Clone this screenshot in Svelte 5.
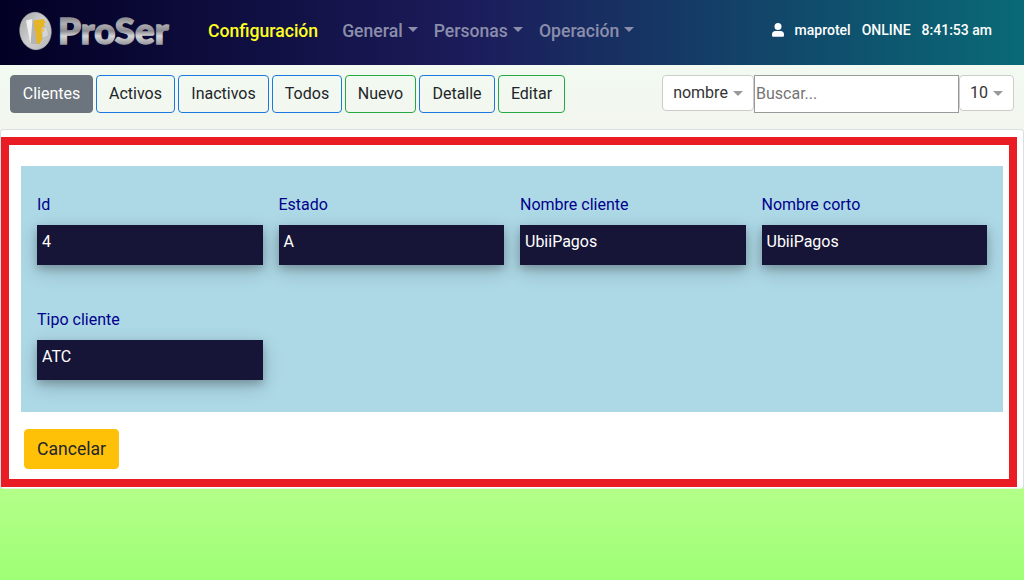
<script>
  const menu = ['General', 'Personas', 'Operación'];
  const actions = [
    { label: 'Clientes', kind: 'active', w: 83 },
    { label: 'Activos', kind: 'blue', w: 79 },
    { label: 'Inactivos', kind: 'blue', w: 91 },
    { label: 'Todos', kind: 'blue', w: 70 },
    { label: 'Nuevo', kind: 'green', w: 71 },
    { label: 'Detalle', kind: 'blue', w: 76 },
    { label: 'Editar', kind: 'green', w: 67 }
  ];
  const fields = [
    ['Id', '4'],
    ['Estado', 'A'],
    ['Nombre cliente', 'UbiiPagos'],
    ['Nombre corto', 'UbiiPagos'],
    ['Tipo cliente', 'ATC']
  ];
</script>

<div class="page">
  <header>
    <svg class="logo" width="156" height="46" viewBox="0 0 156 46" role="img" aria-label="ProSer">
      <defs>
        <linearGradient id="disc" x1="0" y1="0" x2="1" y2="1">
          <stop offset="0" stop-color="#a4a4a6" />
          <stop offset=".5" stop-color="#cfcfcf" />
          <stop offset="1" stop-color="#b5b5b5" />
        </linearGradient>
        <linearGradient id="metal" gradientUnits="userSpaceOnUse" x1="0" y1="9" x2="0" y2="37">
          <stop offset="0" stop-color="#85858b" />
          <stop offset=".25" stop-color="#b0b0b4" />
          <stop offset=".5" stop-color="#8b8b92" />
          <stop offset=".68" stop-color="#d6d6d9" />
          <stop offset="1" stop-color="#94949b" />
        </linearGradient>
      </defs>
      <ellipse cx="20.500" cy="23" rx="15.700" ry="18.700" transform="rotate(-6 20.500 23)" fill="url(#disc)" stroke="#bcbcbc" stroke-width=".6" />
      <path d="M11 12.500L17.500 11 22 36 15.500 36.500Z" fill="#f0f0f1" />
      <path d="M15.500 36.500L22 36 23.500 34 19 12 17.500 11Z" fill="#b4b4b6" />
      <path d="M18.500 12.500L29 11 29 13 31 13.500 29 16 30 18.500 26.500 20 27.500 31 24.500 36 22 36Z" fill="#e5b526" />
      <path d="M26.500 22L32 18.500 33.500 27.500 27.500 30.500Z" fill="#d4d4d5" stroke="#aaa" stroke-width=".4" />
      <path d="M26.500 22L29 20.500 29 23 27 25Z" fill="#edc23c" />
      <text x="43" y="35.500" class="wordmark" fill="url(#metal)" stroke="url(#metal)" textLength="110.500" lengthAdjust="spacingAndGlyphs">ProSer</text>
    </svg>
    <nav>
      <a class="current" href="#configuracion">Configuración</a>
      {#each menu as item}
        <a href="#{item}">{item}<i class="caret"></i></a>
      {/each}
    </nav>
    <div class="session">
      <svg width="12" height="14" viewBox="0 0 12 14" aria-hidden="true">
        <circle cx="6" cy="3.500" r="3.500" fill="#fff" />
        <path d="M3.600 8h4.800A3.600 3.600 0 0 1 12 11.600V12.600Q12 13.800 10.800 13.800H1.200Q0 13.800 0 12.600V11.600A3.600 3.600 0 0 1 3.600 8Z" fill="#fff" />
      </svg>
      <span>maprotel</span><span>ONLINE</span><span>8:41:53 am</span>
    </div>
  </header>

  <section class="toolbar">
    <div class="actions">
      {#each actions as a}
        <button class={a.kind} style="width: {a.w}px">{a.label}</button>
      {/each}
    </div>
    <div class="search">
      <button class="select by">nombre<i class="caret"></i></button>
      <input type="text" placeholder="Buscar..." />
      <button class="select count">10<i class="caret"></i></button>
    </div>
  </section>

  <main>
    <div class="frame">
      <div class="fields">
        {#each fields as [label, value]}
          <div class="field">
            <div class="label">{label}</div>
            <div class="value">{value}</div>
          </div>
        {/each}
      </div>
      <button class="cancel">Cancelar</button>
    </div>
  </main>
</div>

<style>
  :global(body) {
    margin: 0;
    overflow: hidden;
  }
  .page {
    height: 580px;
    display: flex;
    flex-direction: column;
    font: 16px/24px Roboto, sans-serif;
    color: #212529;
    background: linear-gradient(#f2faf1 65px, #f2f6ee 129px, #b3ff88 489px, #9eff75 580px);
  }
  .page * {
    box-sizing: border-box;
  }
  header {
    height: 65px;
    flex: none;
    display: flex;
    align-items: center;
    padding-bottom: 3px;
    background: linear-gradient(90deg, #020024 0%, #1c1c5b 46%, #096a76 100%);
  }
  .logo {
    margin-left: 15px;
    flex: none;
  }
  .wordmark {
    font: 900 36px Lato, sans-serif;
    stroke-width: 1.4px;
  }
  nav {
    display: flex;
    margin-left: 37px;
    gap: 16px;
    font-size: 17.6px;
    font-weight: 500;
  }
  nav a {
    color: #8b8eab;
    text-decoration: none;
    white-space: nowrap;
  }
  nav a.current {
    color: #ff2;
    margin-right: 8px;
  }
  .caret {
    display: inline-block;
    border: 5px solid transparent;
    border-top-color: currentColor;
    border-bottom: 0;
    margin-left: 5px;
    vertical-align: 5px;
  }
  nav .caret {
    margin-left: 5.100px;
    vertical-align: 5px;
  }
  .session {
    display: flex;
    align-items: center;
    gap: 11px;
    margin-left: auto;
    margin-right: 32px;
    font-size: 14px;
    font-weight: 500;
    color: #fff;
    position: relative;
    top: -1px;
  }
  .toolbar {
    height: 64px;
    flex: none;
    display: flex;
    justify-content: space-between;
    padding: 10px 10px 0;
  }
  .actions {
    display: flex;
    gap: 3px;
  }
  button {
    font: inherit;
    color: inherit;
    padding: 0;
    border-radius: 4px;
    white-space: nowrap;
  }
  .actions button {
    height: 38px;
    background: transparent;
    border: 1px solid #1a78df;
  }
  .actions .active {
    background: #6c757d;
    border-color: #6c757d;
    color: #fff;
  }
  .actions .green {
    border-color: #28a745;
  }
  .search {
    display: flex;
    align-items: flex-start;
  }
  .select {
    height: 36px;
    background: #fff;
    border: 1px solid #ccc;
    color: #333;
  }
  .select .caret {
    color: #999;
    margin-left: 5px;
    vertical-align: 2px;
  }
  .by {
    width: 92px;
  }
  .count {
    width: 55px;
  }
  input {
    width: 205px;
    height: 38px;
    font: inherit;
    padding: 0 1px 2px;
    border: 1px solid #999;
    border-radius: 0;
    background: #fff;
  }
  input::placeholder {
    color: #757575;
  }
  main {
    height: 360px;
    flex: none;
    padding: 7px 6px 0 0;
    background: #fff;
    border: 1px solid #dcdfe0;
    border-bottom-color: #e9f5e5;
    border-radius: 4px;
  }
  .frame {
    height: 350px;
    border: 8px solid #ea1c24;
    padding: 21px 6px 0 12px;
  }
  .fields {
    height: 246px;
    display: grid;
    grid-template-columns: repeat(4, 1fr);
    grid-auto-rows: 115px;
    column-gap: 16px;
    padding: 27px 16px 0;
    background: #add8e6;
  }
  .label {
    color: #00008b;
  }
  .value {
    height: 40px;
    margin-top: 8px;
    padding: 5px;
    background: #171537;
    color: #fff;
    box-shadow: 0 4px 8px rgba(0, 0, 0, .2), 0 6px 20px rgba(0, 0, 0, .19);
  }
  .cancel {
    display: block;
    width: 95px;
    height: 40px;
    margin: 17px 0 0 3px;
    font-size: 17.6px;
    background: #ffc107;
    border: 1px solid #ffc107;
  }
</style>
